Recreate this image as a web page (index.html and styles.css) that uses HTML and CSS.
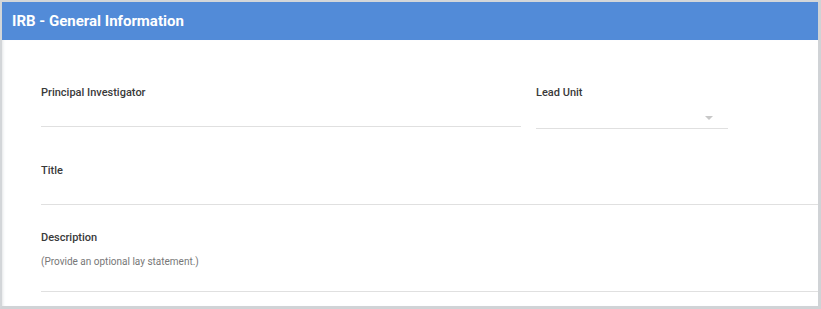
FILE: index.html
```html
<!DOCTYPE html>
<html lang="en">
<head>
  <meta charset="UTF-8" />
  <title>IRB - General Information</title>
  <link rel="stylesheet" href="styles.css">
</head>
<body>
  <div class="painel">
    <header class="painel-topo">
      <h1>IRB - General Information</h1>
    </header>

    <div class="painel-corpo">
      <div class="linha">
        <div class="campo campo-pi">
          <label>Principal Investigator</label>
          <div class="entrada"></div>
        </div>
        <div class="campo campo-unidade">
          <label>Lead Unit</label>
          <div class="entrada seletor">
            <span class="seta"></span>
          </div>
        </div>
      </div>

      <div class="campo campo-titulo">
        <label>Title</label>
        <div class="entrada"></div>
      </div>

      <div class="campo campo-descricao">
        <label>Description</label>
        <div class="entrada area">(Provide an optional lay statement.)</div>
      </div>
    </div>
  </div>
</body>
</html>
```

FILE: styles.css
```css
* {
  margin: 0;
  padding: 0;
  box-sizing: border-box;
}

body {
  background-color: #fff;
  font-family: Roboto, "Liberation Sans", sans-serif;
  color: #333;
}

.painel {
  width: 821px;
  height: 309px;
  border-top: 2px solid #d3d6d9;
  border-left: 2px solid #d3d6d9;
  border-right: 3px solid #d0d3d6;
  border-bottom: 3px solid #d0d3d6;
  background-color: #fff;
  overflow: hidden;
}

.painel-topo {
  height: 38px;
  background-color: #528bd8;
  display: flex;
  align-items: center;
  padding-left: 10px;
}

.painel-topo h1 {
  font-size: 15px;
  font-weight: 700;
  color: #fff;
}

.painel-corpo {
  padding: 45px 0 0 39px;
  box-shadow: inset 3px 0 3px -2px #e3e5e7;
  height: 266px;
}

.linha {
  display: flex;
  gap: 15px;
}

.campo label {
  display: block;
  font-size: 11px;
  font-weight: 500;
  line-height: 16px;
  color: #3a3a3a;
}

.entrada {
  border-bottom: 1px solid #e0e0e0;
  height: 26px;
}

.campo-pi {
  width: 480px;
}

.campo-unidade {
  width: 192px;
}

.seletor {
  height: 28px;
  display: flex;
  justify-content: flex-end;
  align-items: center;
  padding-right: 15px;
  padding-top: 6px;
}

.seta {
  width: 0;
  height: 0;
  border-left: 4px solid transparent;
  border-right: 4px solid transparent;
  border-top: 4px solid #c8c8c8;
}

.campo-titulo {
  margin-top: 34px;
}

.campo-titulo .entrada {
  height: 26px;
}

.campo-descricao {
  margin-top: 25px;
}

.area {
  font-size: 10px;
  color: #777;
  line-height: 14px;
  padding-top: 9px;
  height: 46px;
}
```
